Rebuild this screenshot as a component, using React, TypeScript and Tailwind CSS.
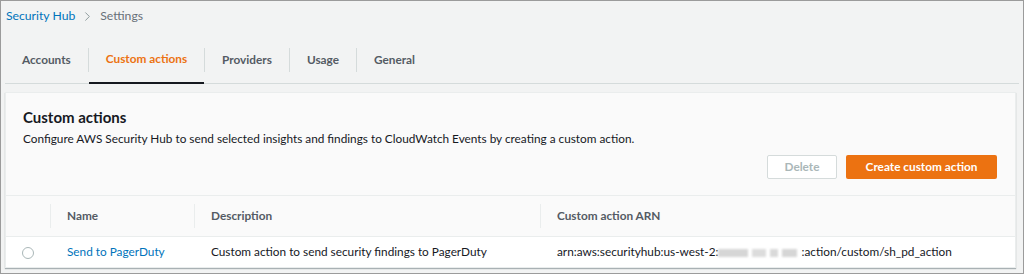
import { ChevronRight } from "lucide-react";

const tabs = ["Accounts", "Custom actions", "Providers", "Usage", "General"];

const App = () => {
  return (
    <div
      className="w-[1024px] h-[274px] overflow-hidden border border-[#9b9b9b] bg-[#f2f3f3] text-[#16191f]"
      style={{ fontFamily: "Lato, 'Liberation Sans', sans-serif" }}
    >
      {/* breadcrumb */}
      <div className="flex items-center h-[31px] pl-[5px] text-[12.2px]">
        <a href="#" className="text-[#0073bb]">
          Security Hub
        </a>
        <ChevronRight className="w-[15px] h-[15px] mx-[5px] text-[#879596]" strokeWidth={1.5} />
        <span className="text-[#687078]">Settings</span>
      </div>

      {/* tabs */}
      <div className="mx-[4px] mt-[14px] flex items-start border-b border-[#d5dbdb] h-[38px]">
        {tabs.map((t, i) => (
          <div key={t} className="flex items-start h-full">
            {i > 0 && <div className="mt-[2px] w-px h-[24px] bg-[#d5dbdb]" />}
            <button
              type="button"
              className={
                i === 1
                  ? "h-[38px] px-[17px] pb-[10px] text-[11.8px] leading-[18px] font-bold text-[#ec7211] border-b-2 border-[#16191f]"
                  : "h-[37px] px-[17px] pb-[10px] text-[11.8px] leading-[18px] font-bold text-[#545b64]"
              }
            >
              {t}
            </button>
          </div>
        ))}
      </div>

      {/* panel */}
      <div className="mx-[4px] mt-[8px] w-[1011px] bg-white border border-[#eaeded] shadow-[0_1px_1px_rgba(0,28,36,0.3)]">
        <div className="bg-[#fafafa] px-[17px] pt-[14px] pb-[16px] border-b border-[#eaeded]">
          <h2 className="text-[15px] font-bold leading-[20px]">Custom actions</h2>
          <p className="mt-[4px] text-[11.8px] leading-[16px]">
            Configure AWS Security Hub to send selected insights and findings to CloudWatch Events by creating a custom
            action.
          </p>
          <div className="mt-[8px] flex justify-end gap-[9px] pr-px">
            <button
              type="button"
              className="h-[24px] w-[70px] border border-[#d5dbdb] bg-white text-[11.8px] font-bold text-[#aab7b8] rounded-[2px]"
            >
              Delete
            </button>
            <button
              type="button"
              className="h-[24px] w-[151px] bg-[#ec7211] text-[11.8px] font-bold text-white rounded-[2px]"
            >
              Create custom action
            </button>
          </div>
        </div>

        <table className="w-full table-fixed text-[11.8px] border-collapse">
          <thead>
            <tr className="bg-[#fafafa] h-[40px] border-b border-[#eaeded]">
              <th className="w-[44px]" />
              <th className="w-[144px] text-left font-bold text-[#545b64]">
                <div className="border-l border-[#eaeded] pl-[16px] leading-[24px]">Name</div>
              </th>
              <th className="w-[346px] text-left font-bold text-[#545b64]">
                <div className="border-l border-[#eaeded] pl-[16px] leading-[24px]">Description</div>
              </th>
              <th className="text-left font-bold text-[#545b64]">
                <div className="border-l border-[#eaeded] pl-[16px] leading-[24px]">Custom action ARN</div>
              </th>
            </tr>
          </thead>
          <tbody>
            <tr className="h-[31px]">
              <td className="text-center">
                <span className="inline-block w-[12px] h-[12px] rounded-full border border-[#aab7b8] align-middle" />
              </td>
              <td className="pl-[17px]">
                <a href="#" className="text-[#0073bb]">
                  Send to PagerDuty
                </a>
              </td>
              <td className="pl-[17px]">Custom action to send security findings to PagerDuty</td>
              <td className="pl-[17px] whitespace-nowrap">
                arn:aws:securityhub:us-west-2:
                <span className="inline-flex items-center gap-[4px] w-[83px] h-[10px] align-middle blur-[1.2px]">
                  <span className="w-[30px] h-[8px] bg-[#d6d6d6]" />
                  <span className="w-[14px] h-[8px] bg-[#dcdcdc]" />
                  <span className="w-[8px] h-[8px] bg-[#d9d9d9]" />
                  <span className="w-[15px] h-[8px] bg-[#d6d6d6]" />
                </span>
                :action/custom/sh_pd_action
              </td>
            </tr>
          </tbody>
        </table>
      </div>
    </div>
  );
};

export default App;
